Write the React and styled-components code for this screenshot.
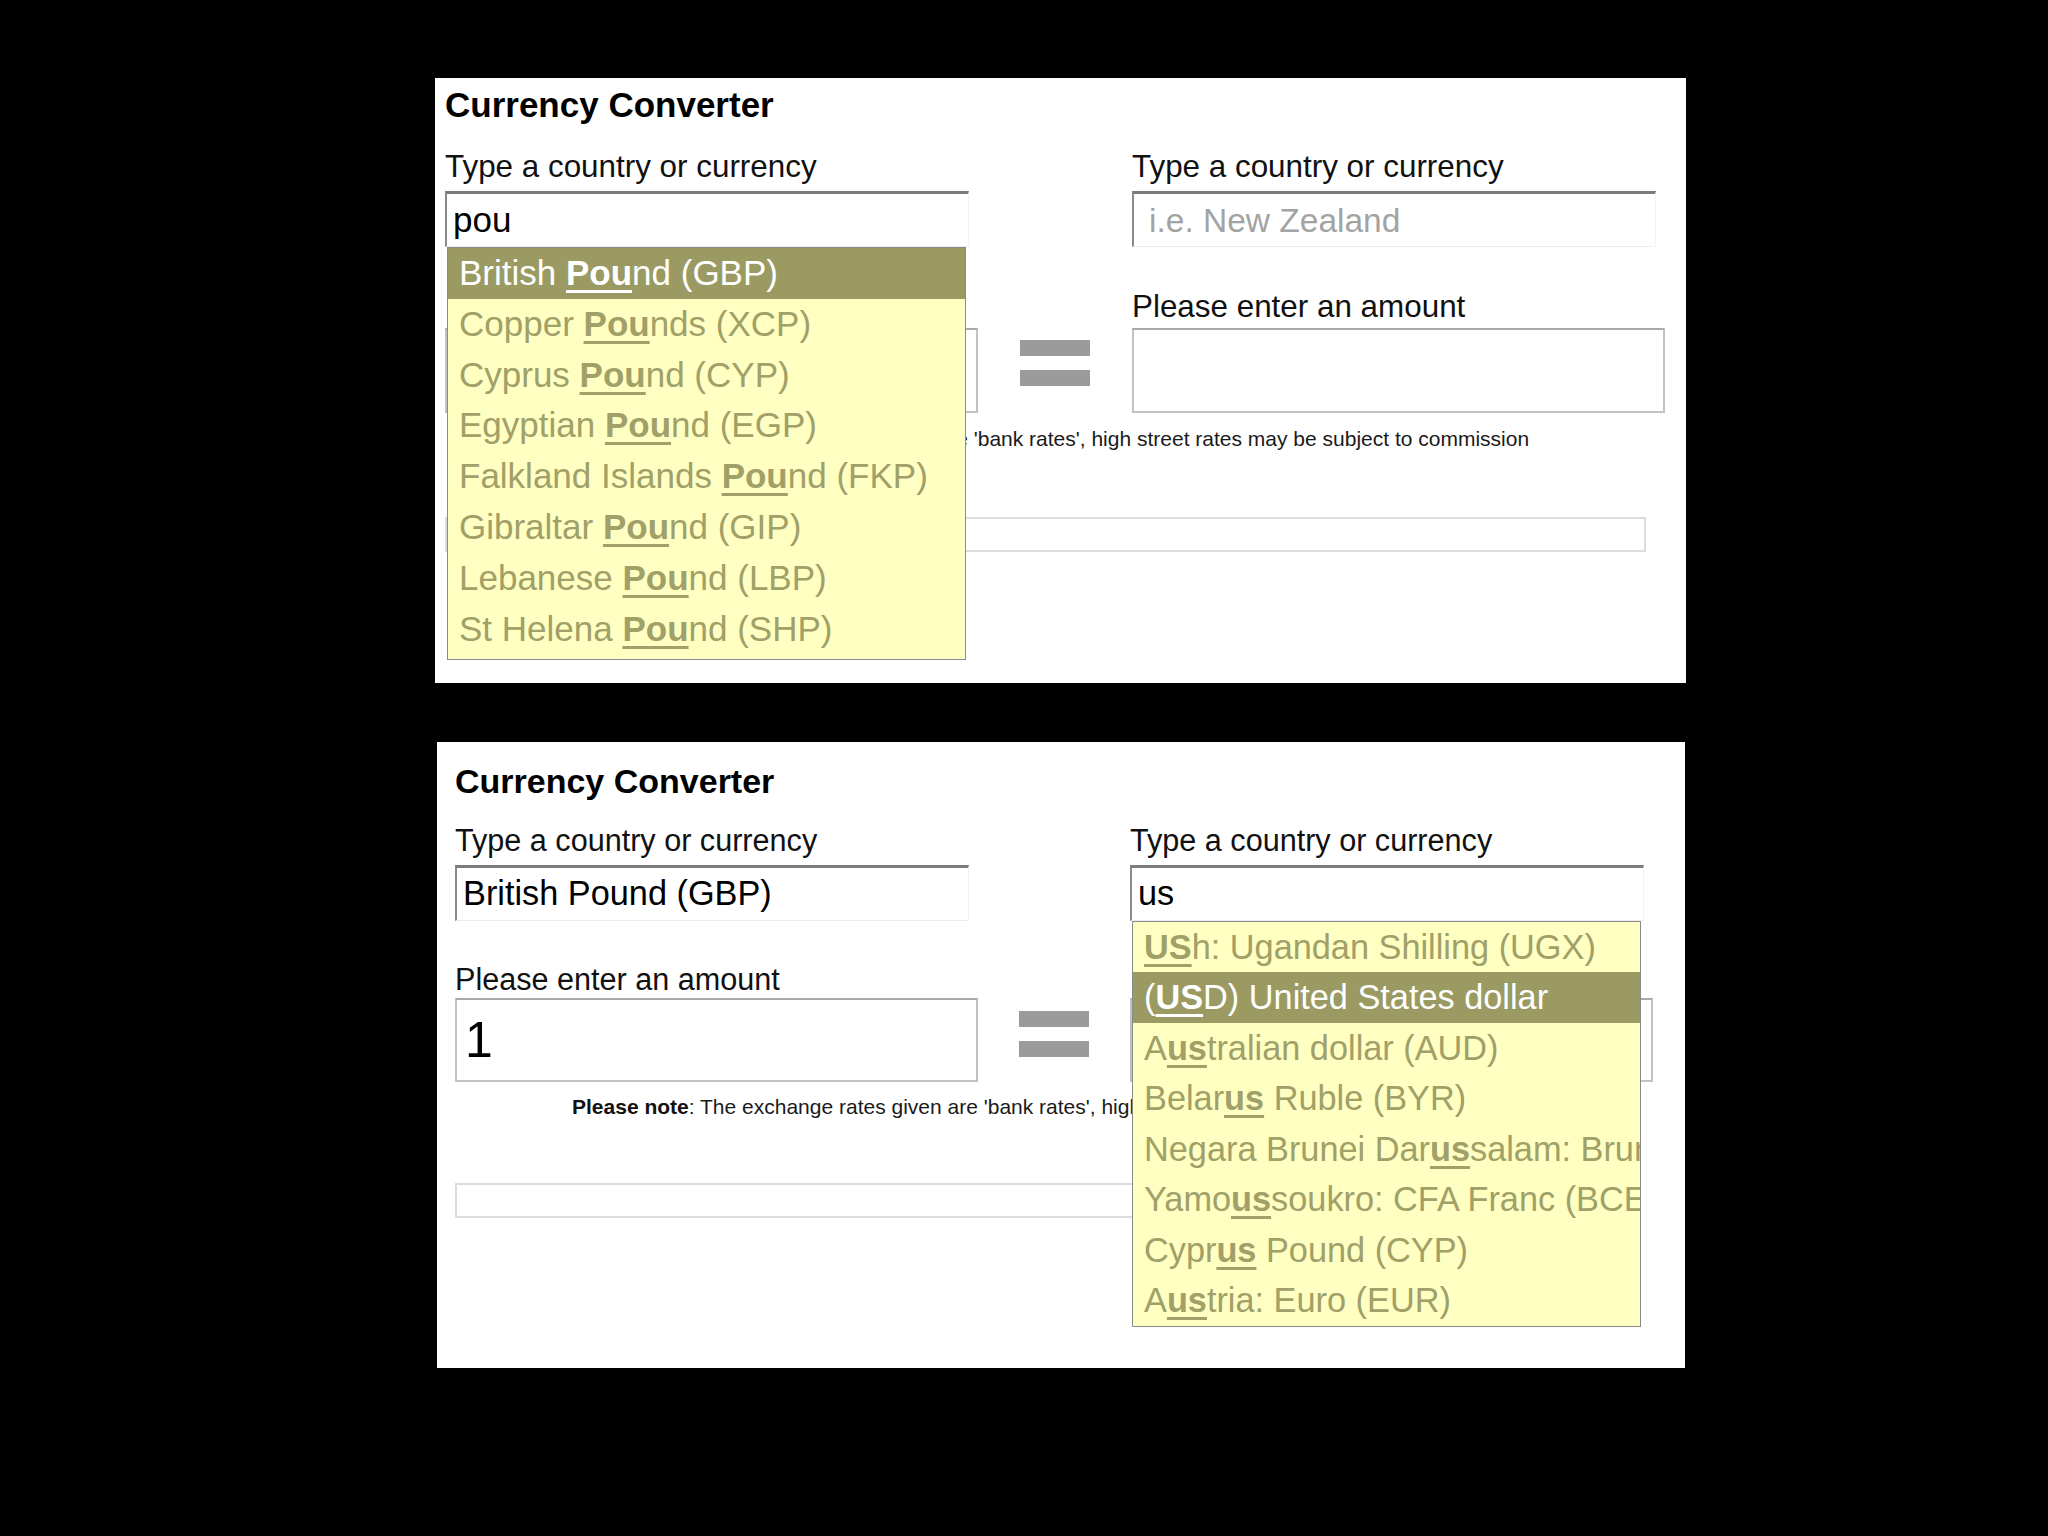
import React from "react";
import styled, { createGlobalStyle } from "styled-components";

const GlobalStyle = createGlobalStyle`
  html, body {
    margin: 0;
    padding: 0;
    background: #000;
  }
  body {
    font-family: "Liberation Sans", Arial, Helvetica, sans-serif;
  }
`;

const poundResults = [
  ["British ", "Pou", "nd (GBP)"],
  ["Copper ", "Pou", "nds (XCP)"],
  ["Cyprus ", "Pou", "nd (CYP)"],
  ["Egyptian ", "Pou", "nd (EGP)"],
  ["Falkland Islands ", "Pou", "nd (FKP)"],
  ["Gibraltar ", "Pou", "nd (GIP)"],
  ["Lebanese ", "Pou", "nd (LBP)"],
  ["St Helena ", "Pou", "nd (SHP)"],
];

const usResults = [
  ["", "US", "h: Ugandan Shilling (UGX)"],
  ["(", "US", "D) United States dollar"],
  ["A", "us", "tralian dollar (AUD)"],
  ["Belar", "us", " Ruble (BYR)"],
  ["Negara Brunei Dar", "us", "salam: Brunei dollar (BND)"],
  ["Yamo", "us", "soukro: CFA Franc (BCEAO) (XOF)"],
  ["Cypr", "us", " Pound (CYP)"],
  ["A", "us", "tria: Euro (EUR)"],
];

// the two screenshots were taken at slightly different zoom levels
const firstShot = {
  width: 1251, height: 605, shift: 0, padTop: 7, padLeft: 10,
  col: 533, gap: 154, title: 35, titleGap: 23.5, label: 31.4,
  inputH: 56, fs: 35, row: 50.8, listPad: 5, labelGap: 42, boxGap: 3,
  boxH: 85, boxPad: 11, eq: 191.5, noteGap: 14, resultGap: 66,
};

const secondShot = {
  width: 1248, height: 626, shift: 2, padTop: 19, padLeft: 18,
  col: 523, gap: 152, title: 34, titleGap: 21, label: 30.6,
  inputH: 56, fs: 34.3, row: 50.5, listPad: 0, labelGap: 40, boxGap: 1,
  boxH: 84, boxPad: 8, eq: 188.5, noteGap: 13, resultGap: 64,
};

export default function App() {
  return (
    <>
      <GlobalStyle />
      <Page>
        <Converter
          l={firstShot}
          from={{ value: "pou", results: poundResults, selected: 0 }}
          to={{ placeholder: "i.e. New Zealand" }}
          amount=""
        />
        <Converter
          l={secondShot}
          from={{ value: "British Pound (GBP)" }}
          to={{ value: "us", results: usResults, selected: 1 }}
          amount="1"
        />
      </Page>
    </>
  );
}

function Converter({ l, from, to, amount }) {
  return (
    <Panel $l={l}>
      <Title $l={l}>Currency Converter</Title>
      <Columns $l={l}>
        <Column>
          <Label $l={l}>Type a country or currency</Label>
          <CurrencyField l={l} {...from} />
          <Label $l={l} $second>Please enter an amount</Label>
          <AmountBox $l={l} readOnly value={amount} />
        </Column>
        <Equals $l={l}>
          <span />
          <span />
        </Equals>
        <Column>
          <Label $l={l}>Type a country or currency</Label>
          <CurrencyField l={l} {...to} />
          <Label $l={l} $second>Please enter an amount</Label>
          <AmountBox $l={l} readOnly value="" />
        </Column>
      </Columns>
      <Note $l={l}>
        <b>Please note</b>: The exchange rates given are 'bank rates', high
        street rates may be subject to commission
      </Note>
      <ResultBar $l={l} />
    </Panel>
  );
}

function CurrencyField({ l, value = "", placeholder, results, selected }) {
  return (
    <FieldWrap>
      <TextInput
        $l={l}
        readOnly
        value={value}
        placeholder={placeholder}
        $indent={placeholder ? 9 : 0}
      />
      {results && (
        <Suggestions $l={l}>
          {results.map(([pre, match, post], i) => (
            <Suggestion key={i} $l={l} $active={i === selected}>
              {pre}
              <Match>{match}</Match>
              {post}
            </Suggestion>
          ))}
        </Suggestions>
      )}
    </FieldWrap>
  );
}

const Page = styled.div`
  min-height: 1536px;
  box-sizing: border-box;
  padding: 78px 0 0 435px;
  display: flex;
  flex-direction: column;
  gap: 59px;
`;

const Panel = styled.section`
  width: ${(p) => p.$l.width}px;
  height: ${(p) => p.$l.height}px;
  margin-left: ${(p) => p.$l.shift}px;
  box-sizing: border-box;
  padding: ${(p) => p.$l.padTop}px 0 0 ${(p) => p.$l.padLeft}px;
  background: #fff;
  color: #111;
`;

const Title = styled.h1`
  margin: 0;
  font-size: ${(p) => p.$l.title}px;
  line-height: 40px;
  font-weight: bold;
  color: #000;
`;

const Columns = styled.div`
  display: grid;
  grid-template-columns: ${(p) => `${p.$l.col}px ${p.$l.gap}px ${p.$l.col}px`};
  margin-top: ${(p) => p.$l.titleGap}px;
`;

const Column = styled.div`
  display: flex;
  flex-direction: column;
`;

const Label = styled.label`
  font-size: ${(p) => p.$l.label}px;
  line-height: 36px;
  color: #111;
  margin-top: ${(p) => (p.$second ? p.$l.labelGap : 0)}px;
`;

const FieldWrap = styled.div`
  position: relative;
  margin-top: 6.5px;
  width: calc(100% - 9px);
`;

const TextInput = styled.input`
  display: block;
  width: 100%;
  height: ${(p) => p.$l.inputH}px;
  box-sizing: border-box;
  margin: 0;
  padding: 0 0 0 6px;
  text-indent: ${(p) => p.$indent}px;
  font-family: "Liberation Sans", Arial, sans-serif;
  font-size: ${(p) => p.$l.fs}px;
  color: #000;
  background: #fff;
  border-style: solid;
  border-width: 3px 1px 1px 2px;
  border-color: #7c7c7c #f3f3f3 #eeeeee #8a8a8a;
  outline: none;

  &::placeholder {
    color: #a3a3a3;
    font-size: 33.5px;
  }
`;

const Suggestions = styled.ul`
  position: absolute;
  top: 100%;
  left: 2px;
  right: 3px;
  z-index: 10;
  margin: 0;
  padding: 0 0 ${(p) => p.$l.listPad}px;
  list-style: none;
  background: #ffffc2;
  border: 1px solid #8a8a8a;
  overflow: hidden;
`;

const Suggestion = styled.li`
  height: ${(p) => p.$l.row}px;
  line-height: ${(p) => p.$l.row}px;
  padding-left: 11px;
  font-size: ${(p) => p.$l.fs}px;
  white-space: nowrap;
  overflow: hidden;
  color: ${(p) => (p.$active ? "#fff" : "#a0a068")};
  background: ${(p) => (p.$active ? "#9a9a62" : "transparent")};
`;

const Match = styled.b`
  font-weight: bold;
  text-decoration: underline;
  text-decoration-thickness: 3px;
  text-underline-offset: 5px;
`;

const AmountBox = styled.input`
  display: block;
  margin: ${(p) => p.$l.boxGap}px 0 0;
  width: 100%;
  height: ${(p) => p.$l.boxH}px;
  box-sizing: border-box;
  padding: 0 0 0 ${(p) => p.$l.boxPad}px;
  font-family: "Liberation Sans", Arial, sans-serif;
  font-size: 50px;
  color: #000;
  background: #fff;
  border: 2px solid #c2c2c2;
  border-top-color: #a9a9a9;
  outline: none;
`;

const Equals = styled.div`
  display: flex;
  flex-direction: column;
  align-items: center;
  gap: 14px;
  padding-top: ${(p) => p.$l.eq}px;

  span {
    display: block;
    width: 70px;
    height: 16px;
    background: #9b9b9b;
  }
`;

const Note = styled.p`
  margin: ${(p) => p.$l.noteGap}px 0 0 117px;
  font-size: 21px;
  line-height: 24px;
  color: #1a1a1a;
  white-space: nowrap;

  b {
    font-weight: bold;
    color: #111;
  }
`;

const ResultBar = styled.div`
  margin-top: ${(p) => p.$l.resultGap}px;
  width: ${(p) => p.$l.col * 2 + p.$l.gap - 19}px;
  height: 35px;
  box-sizing: border-box;
  border: 2px solid #dcdcdc;
`;
